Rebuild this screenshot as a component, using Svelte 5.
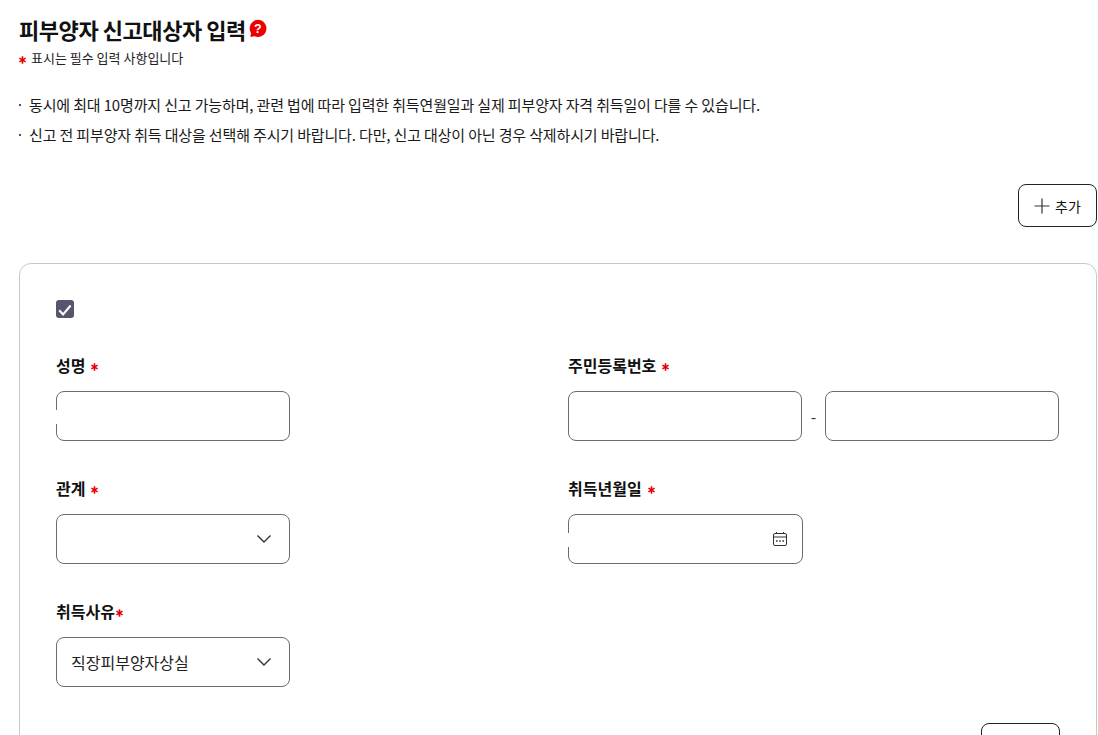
<script>
    const notes = [
        '동시에 최대 10명까지 신고 가능하며, 관련 법에 따라 입력한 취득연월일과 실제 피부양자 자격 취득일이 다를 수 있습니다.',
        '신고 전 피부양자 취득 대상을 선택해 주시기 바랍니다. 다만, 신고 대상이 아닌 경우 삭제하시기 바랍니다.'
    ];
</script>

{#snippet star()}
    <svg class="star" width="7" height="8" viewBox="0 0 7 8">
        <path d="M3.5.3v7.4M.4 2.1l6.2 3.8M6.6 2.1L.4 5.9" stroke="#e60000" stroke-width="1.6" fill="none" />
    </svg>
{/snippet}

<div class="page">
    <div class="title-row">
        <h1>피부양자 신고대상자 입력</h1>
        <svg class="help" width="19" height="19" viewBox="0 0 19 19">
            <path d="M9.8 .8a8.6 8.6 0 1 1-3.4 16.5L2.4 18l.6-4A8.6 8.6 0 0 1 9.8 .8z" fill="#ee0000" />
            <text x="9.8" y="13.8" text-anchor="middle" class="help-q">?</text>
        </svg>
    </div>
    <p class="req-note">{@render star()}<span>표시는 필수 입력 사항입니다</span></p>

    <ul class="notes">
        {#each notes as note}
            <li>{note}</li>
        {/each}
    </ul>

    <div class="add-row">
        <button class="btn-add">
            <svg width="16" height="16" viewBox="0 0 16 16">
                <path d="M8 .5v15M.5 8h15" stroke="#333" stroke-width="1.2" fill="none" />
            </svg>
            추가
        </button>
    </div>

    <div class="card">
        <span class="check">
            <svg width="18" height="18" viewBox="0 0 18 18">
                <path d="M3.2 9.3l3.9 4.2 7.5-9" stroke="#fff" stroke-width="2" fill="none" />
            </svg>
        </span>

        <div class="form-grid">
            <div class="field">
                <div class="label">성명{@render star()}</div>
                <div class="box wide notched"></div>
            </div>
            <div class="field">
                <div class="label">주민등록번호{@render star()}</div>
                <div class="rrn">
                    <div class="box wide"></div>
                    <span class="dash">-</span>
                    <div class="box wide"></div>
                </div>
            </div>
            <div class="field">
                <div class="label">관계{@render star()}</div>
                <div class="box wide select">
                    <svg class="chev" width="16" height="10" viewBox="0 0 16 10">
                        <path d="M1.5 1.5L8 8l6.5-6.5" stroke="#333" stroke-width="1.4" fill="none" />
                    </svg>
                </div>
            </div>
            <div class="field">
                <div class="label">취득년월일{@render star()}</div>
                <div class="box date-box select notched date">
                    <svg width="16" height="16" viewBox="0 0 16 16" fill="none" stroke="#333" stroke-width="1">
                        <rect x="1.5" y="2.5" width="13" height="12" rx="1.5" />
                        <path d="M1.5 6h13M4.5 1v2M11.5 1v2" />
                        <path d="M4 10h1.6M7.2 10h1.6M10.4 10H12" stroke-width="1.4" />
                    </svg>
                </div>
            </div>
            <div class="field">
                <div class="label tight">취득사유{@render star()}</div>
                <div class="box wide select value">
                    직장피부양자상실
                    <svg class="chev" width="16" height="10" viewBox="0 0 16 10">
                        <path d="M1.5 1.5L8 8l6.5-6.5" stroke="#333" stroke-width="1.4" fill="none" />
                    </svg>
                </div>
            </div>
        </div>

        <div class="card-foot">
            <button class="btn-foot"></button>
        </div>
    </div>
</div>

<style>
    :global(html), :global(body) {
        overflow: hidden;
        height: 100%;
        background: #fff;
    }

    .page {
        font-family: "Noto Sans CJK KR", "Noto Sans", sans-serif;
        color: #111;
        padding: 0 1px 0 19px;
        box-sizing: border-box;
        width: 1098px;
    }

    .title-row {
        display: flex;
        align-items: center;
        gap: 2px;
        height: 30px;
        padding-top: 14px;
    }

    h1 {
        margin: -1px 0 0;
        font-size: 22px;
        font-weight: 700;
        line-height: 30px;
        letter-spacing: -0.02em;
    }

    .help {
        margin-top: -1px;
    }

    .help-q {
        font-family: "Liberation Sans", sans-serif;
        font-size: 12.5px;
        font-weight: 700;
        fill: #fff;
    }

    .req-note {
        display: flex;
        align-items: center;
        gap: 5px;
        margin: 5px 0 0;
        font-size: 13px;
        line-height: 18px;
        color: #222;
    }

    .req-note .star {
        margin-top: 3px;
    }

    .notes {
        list-style: none;
        margin: 23px 0 0;
        padding: 0;
        font-size: 15px;
        line-height: 30px;
        letter-spacing: -0.01em;
        color: #1a1a1a;
    }

    .notes li {
        position: relative;
        padding-left: 10px;
    }

    .notes li::before {
        content: "";
        position: absolute;
        left: 0;
        top: 14px;
        width: 2px;
        height: 2px;
        background: #555;
    }

    .add-row {
        display: flex;
        justify-content: flex-end;
        margin-top: 34px;
    }

    .btn-add {
        display: flex;
        align-items: center;
        justify-content: center;
        gap: 5px;
        width: 79px;
        height: 43px;
        padding: 0;
        background: #fff;
        border: 1px solid #222;
        border-radius: 8px;
        font: inherit;
        font-size: 14px;
        color: #111;
    }

    .card {
        margin-top: 36px;
        border: 1px solid #c8c8c8;
        border-radius: 12px;
        padding: 36px 36px 0;
        height: 600px;
        box-sizing: border-box;
        width: 1078px;
    }

    .check {
        display: block;
        width: 18px;
        height: 18px;
        background: #55566e;
        border-radius: 3px;
    }

    .form-grid {
        display: grid;
        grid-template-columns: 512px 1fr;
        row-gap: 35px;
        margin-top: 35px;
    }

    .label {
        display: flex;
        align-items: center;
        font-size: 16px;
        font-weight: 700;
        line-height: 24px;
        color: #111;
        margin-bottom: 14px;
    }

    .label .star {
        margin: 3px 0 0 6px;
    }

    .label.tight .star {
        margin-left: 1px;
    }

    .box {
        position: relative;
        height: 50px;
        box-sizing: border-box;
        border: 1px solid #6b6b6b;
        border-radius: 8px;
        background: #fff;
    }

    .wide {
        width: 234px;
    }

    .date-box {
        width: 235px;
    }

    .notched::before {
        content: "";
        position: absolute;
        left: -1px;
        top: 18px;
        width: 1px;
        height: 14px;
        background: #fff;
    }

    .rrn {
        display: flex;
        align-items: center;
    }

    .dash {
        width: 23px;
        text-align: center;
        font-size: 16px;
        color: #333;
    }

    .select {
        display: flex;
        align-items: center;
        justify-content: space-between;
        padding: 0 17px 0 14px;
    }

    .select .chev {
        margin-left: auto;
    }

    .value {
        font-size: 16px;
        color: #222;
    }

    .date {
        padding-right: 14px;
        justify-content: flex-end;
    }

    .card-foot {
        display: flex;
        justify-content: flex-end;
        margin-top: 36px;
    }

    .btn-foot {
        width: 79px;
        height: 43px;
        background: #fff;
        border: 1px solid #222;
        border-radius: 8px;
    }
</style>
